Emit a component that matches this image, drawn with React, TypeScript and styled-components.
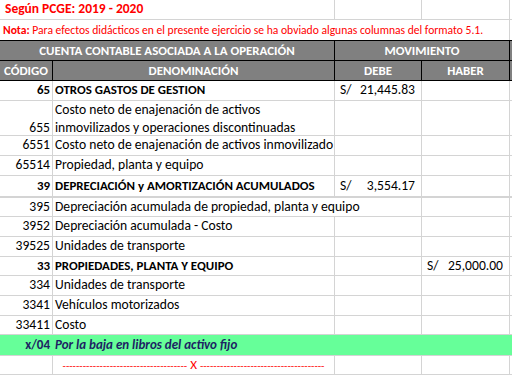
import React from 'react'
import styled, { createGlobalStyle, css } from 'styled-components'

const GlobalStyle = createGlobalStyle`
  body {
    margin: 0;
    background: #ffffff;
    font-family: Carlito, Lato, "Liberation Sans", sans-serif;
    font-size: 13.6px;
    color: #000000;
  }
`

const COLS = '53px 282px 87px 88px'
const GRID = '#d4d4d4'

const Sheet = styled.div`
  width: 512px;
  display: flex;
  flex-direction: column;
`

const Row = styled.div<{ $h: number; $bg?: string; $thick?: boolean; $flush?: boolean }>`
  display: grid;
  grid-template-columns: ${COLS};
  height: ${(p) => p.$h}px;
  background: ${(p) => p.$bg || 'transparent'};
  border-bottom: ${(p) => (p.$flush ? 0 : p.$thick ? 2 : 1)}px solid ${GRID};
  box-sizing: border-box;
`

const Cell = styled.div<{
  $span?: number
  $align?: 'left' | 'right' | 'center'
  $bold?: boolean
  $open?: boolean
}>`
  grid-column: span ${(p) => p.$span || 1};
  display: flex;
  align-items: flex-end;
  justify-content: ${(p) =>
    p.$align === 'right' ? 'flex-end' : p.$align === 'center' ? 'center' : 'flex-start'};
  padding: 0 2px 1px 2px;
  border-right: 1px solid ${(p) => (p.$open ? 'transparent' : GRID)};
  white-space: nowrap;
  overflow: visible;
  font-weight: ${(p) => (p.$bold ? 700 : 400)};
  font-size: ${(p) => (p.$bold ? 12.9 : 13.6)}px;
  line-height: 18px;
  min-width: 0;
`

const Title = styled.span`
  color: #ff0000;
  font-weight: 700;
  font-size: 13.5px;
  padding-left: 3px;
`

const Note = styled.span`
  color: #ff0000;
  font-size: 11.6px;
  padding-left: 1px;
  b {
    font-weight: 700;
  }
`

const HeadRow = styled.div`
  display: grid;
  grid-template-columns: ${COLS};
  height: 20px;
  background: #808080;
  border-top: 1px solid #000000;
  box-sizing: border-box;
`

const HeadCell = styled.div<{ $span?: number }>`
  grid-column: span ${(p) => p.$span || 1};
  display: flex;
  align-items: center;
  justify-content: center;
  border-right: 1px solid #000000;
  color: #ffffff;
  font-weight: 700;
  font-size: 12.9px;
  white-space: nowrap;
`

const HeadBottom = styled.div`
  border-top: 1px solid #000000;
`

const Lines = styled.div`
  display: flex;
  flex-direction: column;
  line-height: 18px;
`

const Amount = styled(Cell)`
  justify-content: space-between;
  padding: 0 6px 1px 5px;
`

const Entry = styled.span<{ $italic?: boolean }>`
  color: #1d2363;
  font-weight: 700;
  font-size: 13px;
  ${(p) =>
    p.$italic &&
    css`
      font-style: italic;
    `}
`

const Dashes = styled.span`
  color: #ff0000;
  font-size: 11px;
  b {
    font-weight: 400;
    font-size: 13px;
    padding: 0 3px;
  }
`

type Line = {
  code: string
  name: React.ReactNode
  bold?: boolean
  debe?: string
  haber?: string
  h?: number
  thick?: boolean
  overflow?: boolean
}

const lines: Line[] = [
  { code: '65', name: 'OTROS GASTOS DE GESTION', bold: true, debe: '21,445.83' },
  {
    code: '655',
    name: (
      <Lines>
        <span>Costo neto de enajenación de activos</span>
        <span>inmovilizados y operaciones discontinuadas</span>
      </Lines>
    ),
    h: 35,
  },
  { code: '6551', name: 'Costo neto de enajenación de activos inmovilizado' },
  { code: '65514', name: 'Propiedad, planta y equipo' },
  {
    code: '39',
    name: 'DEPRECIACIÓN y AMORTIZACIÓN ACUMULADOS',
    bold: true,
    debe: '3,554.17',
    h: 22,
    thick: true,
  },
  { code: '395', name: 'Depreciación acumulada de propiedad, planta y equipo', h: 19, overflow: true },
  { code: '3952', name: 'Depreciación acumulada - Costo' },
  { code: '39525', name: 'Unidades de transporte' },
  { code: '33', name: 'PROPIEDADES, PLANTA Y EQUIPO', bold: true, haber: '25,000.00', h: 19 },
  { code: '334', name: 'Unidades de transporte' },
  { code: '3341', name: 'Vehículos motorizados' },
  { code: '33411', name: 'Costo', h: 19 },
]

const Money = ({ value }: { value?: string }) =>
  value ? (
    <Amount>
      <span>S/</span>
      <span>{value}</span>
    </Amount>
  ) : (
    <Cell />
  )

const dash = '-'.repeat(37)

export default function App() {
  return (
    <>
      <GlobalStyle />
      <Sheet>
        <Row $h={20}>
          <Cell $span={2}>
            <Title>Según PCGE: 2019 - 2020</Title>
          </Cell>
          <Cell />
          <Cell />
        </Row>
        <Row $h={20} $flush>
          <Cell $span={4}>
            <Note>
              <b>Nota:</b> Para efectos didácticos en el presente ejercicio se ha obviado algunas
              columnas del formato 5.1.
            </Note>
          </Cell>
        </Row>
        <HeadRow>
          <HeadCell $span={2}>CUENTA CONTABLE ASOCIADA A LA OPERACIÓN</HeadCell>
          <HeadCell $span={2}>MOVIMIENTO</HeadCell>
        </HeadRow>
        <HeadRow>
          <HeadCell>CÓDIGO</HeadCell>
          <HeadCell>DENOMINACIÓN</HeadCell>
          <HeadCell>DEBE</HeadCell>
          <HeadCell>HABER</HeadCell>
        </HeadRow>
        <HeadBottom />
        {lines.map((l) => (
          <Row key={l.code} $h={l.h || 20} $thick={l.thick}>
            <Cell $align="right" $bold={l.bold}>
              {l.code}
            </Cell>
            <Cell $bold={l.bold} $open={l.overflow}>
              {l.name}
            </Cell>
            <Money value={l.debe} />
            <Money value={l.haber} />
          </Row>
        ))}
        <Row $h={21} $bg="#66ff99">
          <Cell $align="right" $open>
            <Entry>x/04</Entry>
          </Cell>
          <Cell $open $span={3}>
            <Entry $italic>Por la baja en libros del activo fijo</Entry>
          </Cell>
        </Row>
        <Row $h={19}>
          <Cell />
          <Cell $align="center">
            <Dashes>
              {dash}
              <b>X</b>
              {dash}
            </Dashes>
          </Cell>
          <Cell />
          <Cell />
        </Row>
      </Sheet>
    </>
  )
}
